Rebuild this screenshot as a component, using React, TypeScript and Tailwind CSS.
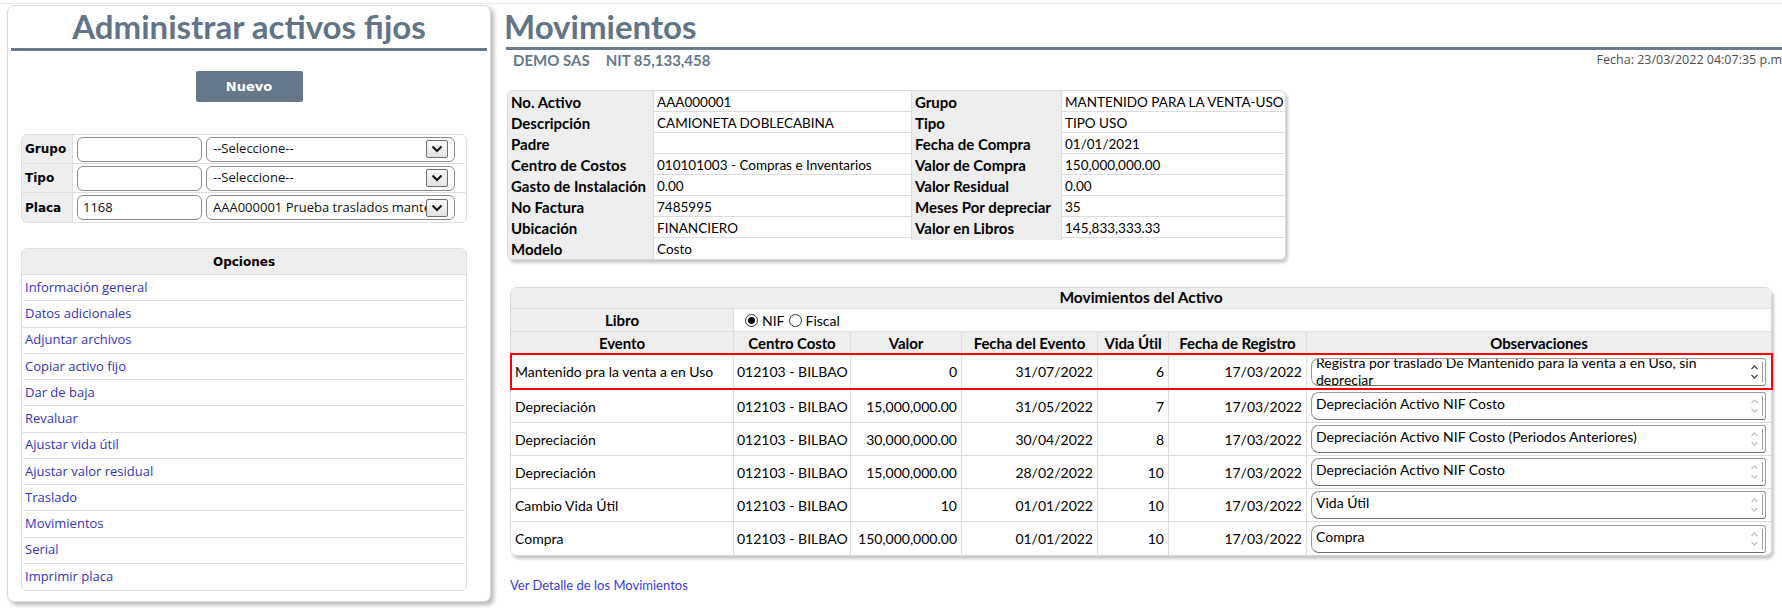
import React from "react";

const infoRows: string[][] = [
  ["No. Activo", "AAA000001", "Grupo", "MANTENIDO PARA LA VENTA-USO"],
  ["Descripción", "CAMIONETA DOBLECABINA", "Tipo", "TIPO USO"],
  ["Padre", "", "Fecha de Compra", "01/01/2021"],
  ["Centro de Costos", "010101003 - Compras e Inventarios", "Valor de Compra", "150,000,000.00"],
  ["Gasto de Instalación", "0.00", "Valor Residual", "0.00"],
  ["No Factura", "7485995", "Meses Por depreciar", "35"],
  ["Ubicación", "FINANCIERO", "Valor en Libros", "145,833,333.33"],
  ["Modelo", "Costo"],
];

const movimientos = [
  { evento: "Mantenido pra la venta a en Uso", valor: "0", fecha: "31/07/2022", vida: "6", obs: "", marcado: true },
  { evento: "Depreciación", valor: "15,000,000.00", fecha: "31/05/2022", vida: "7", obs: "Depreciación Activo NIF Costo" },
  { evento: "Depreciación", valor: "30,000,000.00", fecha: "30/04/2022", vida: "8", obs: "Depreciación Activo NIF Costo (Periodos Anteriores)" },
  { evento: "Depreciación", valor: "15,000,000.00", fecha: "28/02/2022", vida: "10", obs: "Depreciación Activo NIF Costo" },
  { evento: "Cambio Vida Útil", valor: "10", fecha: "01/01/2022", vida: "10", obs: "Vida Útil" },
  { evento: "Compra", valor: "150,000,000.00", fecha: "01/01/2022", vida: "10", obs: "Compra" },
];

const opciones = [
  "Información general",
  "Datos adicionales",
  "Adjuntar archivos",
  "Copiar activo fijo",
  "Dar de baja",
  "Revaluar",
  "Ajustar vida útil",
  "Ajustar valor residual",
  "Traslado",
  "Movimientos",
  "Serial",
  "Imprimir placa",
];

function Chevron() {
  return (
    <svg width="12" height="8" viewBox="0 0 12 8">
      <path d="M1.5 1.5 L6 6 L10.5 1.5" fill="none" stroke="#111" strokeWidth="2" />
    </svg>
  );
}

function FilterRow({ label, code, text, last }: { label: string; code: string; text: string; last?: boolean }) {
  return (
    <div className={`flex h-[29px] ${last ? "" : "border-b border-[#dedede]"}`}>
      <div className="flex w-[51px] items-center border-r border-[#dedede] bg-[#eeeeee] pl-[3px] font-['DejaVu_Sans',sans-serif] text-[12px] font-bold text-black">
        {label}
      </div>
      <div className="flex flex-1 items-center gap-[4px] pl-[4px]">
        <div className="flex h-[25px] w-[125px] items-center rounded-[6px] border border-[#8c8c8c] pl-[5px] text-[13px] text-[#111]">
          {code}
        </div>
        <div className="flex h-[25px] w-[249px] items-center rounded-[6px] border border-[#8c8c8c] pl-[6px] pr-[6px] text-[13px] text-[#111]">
          <span className="flex-1 overflow-hidden whitespace-nowrap">{text}</span>
          <span className="flex h-[18px] w-[22px] shrink-0 items-center justify-center rounded-[2px] border border-[#707070] bg-gradient-to-b from-[#fbfbfb] to-[#e2e2e2]">
            <Chevron />
          </span>
        </div>
      </div>
    </div>
  );
}

function Radio({ checked }: { checked?: boolean }) {
  return (
    <span className="inline-flex h-[13px] w-[13px] items-center justify-center rounded-full border border-[#333] bg-white">
      {checked && <span className="h-[7px] w-[7px] rounded-full bg-black" />}
    </span>
  );
}

function Flechas({ active }: { active?: boolean }) {
  const c = active ? "#4a4a4a" : "#c4c4c4";
  return (
    <svg width="9" height="18" viewBox="0 0 9 18">
      <path d="M1.5 6 L4.5 3 L7.5 6" fill="none" stroke={c} strokeWidth="1.3" />
      <path d="M1.5 12 L4.5 15 L7.5 12" fill="none" stroke={c} strokeWidth="1.3" />
    </svg>
  );
}

function Observacion({ text, active }: { text: string; active?: boolean }) {
  return (
    <div className="flex h-[28px] items-stretch overflow-hidden rounded-l-[8px] rounded-r-[3px] border border-[#9a9a9a] border-b-[#707070] bg-white">
      <div className="flex-1 overflow-hidden whitespace-nowrap pl-[4px] text-[14px]">
        {active ? (
          <div className="-mt-[5px] leading-[17px]">
            Registra por traslado De Mantenido para la venta a en Uso, sin
            <br />
            depreciar
          </div>
        ) : (
          <div className="pt-[2px] leading-[17px]">{text}</div>
        )}
      </div>
      <div className="flex w-[16px] items-center justify-center">
        <Flechas active={active} />
      </div>
      <div className="my-[3px] w-px bg-[#9a9a9a]" />
      <div className="w-[2px]" />
    </div>
  );
}

export default function App() {
  const cols = "grid grid-cols-[223px_117px_111px_136px_71px_138px_1fr]";
  return (
    <div className="h-[608px] w-[1782px] overflow-hidden bg-white pt-[3px] font-['Open_Sans',sans-serif] text-black">
      <div className="h-px bg-[#e8e8e8]" />
      <div className="flex">
        {/* panel izquierdo */}
        <div className="ml-[7px] mt-[1px] h-[597px] w-[484px] shrink-0 rounded-[7px] border border-[#dadada] bg-white shadow-[3px_3px_4px_rgba(0,0,0,0.28)]">
          <h1 className="pt-[4px] text-center font-['Lato',sans-serif] text-[33px] font-bold leading-[33px] text-[#627487]">
            Administrar activos fijos
          </h1>
          <div className="mx-[3px] mt-[5px] h-[3px] bg-[#6a7b8c]" />
          <div className="mt-[20px] flex justify-center">
            <button className="h-[31px] w-[107px] rounded-[2px] bg-[#667789] font-['DejaVu_Sans',sans-serif] text-[13px] font-bold text-white">
              Nuevo
            </button>
          </div>

          <div className="ml-[13px] mt-[32px] w-[446px] overflow-hidden rounded-[6px] border border-[#dedede]">
            <FilterRow label="Grupo" code="" text="--Seleccione--" />
            <FilterRow label="Tipo" code="" text="--Seleccione--" />
            <FilterRow label="Placa" code="1168" text="AAA000001 Prueba traslados mantenido" last />
          </div>

          <div className="ml-[13px] mt-[25px] w-[446px] overflow-hidden rounded-[6px] border border-[#dedede]">
            <div className="flex h-[26px] items-center justify-center border-b border-[#dedede] bg-[#eeeeee] font-['DejaVu_Sans',sans-serif] text-[12px] font-bold">
              Opciones
            </div>
            {opciones.map((o, i) => (
              <div
                key={o}
                className={`flex h-[26.25px] items-center pl-[3px] text-[13px] text-[#3333c4] ${
                  i < opciones.length - 1 ? "border-b border-[#dedede]" : ""
                }`}
              >
                {o}
              </div>
            ))}
          </div>
        </div>

        {/* contenido */}
        <div className="flex-1 pl-[13px] font-['Lato',sans-serif]">
          <h2 className="mt-[6px] text-[33px] font-bold leading-[33px] text-[#627487]">Movimientos</h2>
          <div className="ml-[2px] mt-[4px] h-[3px] bg-[#6a7b8c]" />
          <div className="flex items-start justify-between">
            <div className="ml-[9px] mt-[3px] flex gap-[16px] text-[15px] font-bold leading-[15px] text-[#66788b]">
              <span>DEMO SAS</span>
              <span>NIT 85,133,458</span>
            </div>
            <div className="mt-[3px] whitespace-nowrap font-['Open_Sans',sans-serif] text-[12.5px] leading-[13px] text-[#505050]">
              Fecha: 23/03/2022 04:07:35 p.m
            </div>
          </div>

          <div className="ml-[3px] mt-[22px] w-[779px] overflow-hidden rounded-[6px] border border-[#d8d8d8] text-[13.5px] shadow-[2px_3px_3px_rgba(0,0,0,0.22)]">
            {infoRows.map((r, i) => (
              <div
                key={r[0]}
                className={`grid h-[21px] grid-cols-[146px_258px_150px_1fr] ${
                  i < infoRows.length - 1 ? "border-b border-[#dcdcdc]" : ""
                }`}
              >
                <div className="flex items-center whitespace-nowrap border-r border-[#dcdcdc] bg-[#eeeeee] pl-[3px] text-[15px] font-bold">
                  {r[0]}
                </div>
                <div className={`flex items-center pl-[3px] ${r[2] ? "border-r border-[#dcdcdc]" : ""}`}>{r[1]}</div>
                {r[2] ? (
                  <>
                    <div className="flex items-center whitespace-nowrap border-r border-[#dcdcdc] bg-[#eeeeee] pl-[3px] text-[15px] font-bold">
                      {r[2]}
                    </div>
                    <div className="flex items-center pl-[3px]">{r[3]}</div>
                  </>
                ) : null}
              </div>
            ))}
          </div>

          <div className="ml-[6px] mt-[27px] w-[1262px] rounded-[7px] border border-[#d8d8d8] shadow-[2px_3px_3px_rgba(0,0,0,0.22)]">
            <div className="flex h-[21px] items-center justify-center rounded-t-[7px] border-b border-[#dcdcdc] bg-[#eeeeee] text-[15.5px] font-bold">
              Movimientos del Activo
            </div>
            <div className="flex h-[23px] border-b border-[#dcdcdc]">
              <div className="flex w-[223px] items-center justify-center border-r border-[#dcdcdc] bg-[#eeeeee] text-[15px] font-bold">
                Libro
              </div>
              <div className="flex items-center gap-[4px] pl-[11px] text-[14px]">
                <Radio checked />
                <span>NIF</span>
                <Radio />
                <span>Fiscal</span>
              </div>
            </div>
            <div className={`${cols} h-[22px] border-b border-[#dcdcdc] bg-[#eeeeee] text-[15px] font-bold`}>
              {["Evento", "Centro Costo", "Valor", "Fecha del Evento", "Vida Útil", "Fecha de Registro", "Observaciones"].map(
                (h, i) => (
                  <div
                    key={h}
                    className={`flex items-center justify-center whitespace-nowrap tracking-[-0.1px] ${
                      i < 6 ? "border-r border-[#dcdcdc]" : ""
                    }`}
                  >
                    {h}
                  </div>
                )
              )}
            </div>
            {movimientos.map((m, i) => (
              <div
                key={i}
                className={`${cols} relative text-[14px] ${m.marcado ? "h-[36px]" : "h-[33px]"} ${
                  i < movimientos.length - 1 ? "border-b border-[#dcdcdc]" : ""
                }`}
              >
                <div className="flex items-center whitespace-nowrap border-r border-[#dcdcdc] pl-[4px]">{m.evento}</div>
                <div className="flex items-center whitespace-nowrap border-r border-[#dcdcdc] pl-[3px]">012103 - BILBAO</div>
                <div className="flex items-center justify-end border-r border-[#dcdcdc] pr-[4px]">{m.valor}</div>
                <div className="flex items-center justify-end border-r border-[#dcdcdc] pr-[4px]">{m.fecha}</div>
                <div className="flex items-center justify-end border-r border-[#dcdcdc] pr-[4px]">{m.vida}</div>
                <div className="flex items-center justify-end border-r border-[#dcdcdc] pr-[4px]">17/03/2022</div>
                <div className="flex flex-col justify-center pl-[4px] pr-[5px]">
                  <Observacion text={m.obs} active={m.marcado} />
                </div>
                {m.marcado && (
                  <div className="pointer-events-none absolute -bottom-[1px] -left-[1px] -right-[2px] -top-[1px] border-2 border-[#ff0000]" />
                )}
              </div>
            ))}
          </div>

          <div className="ml-[6px] mt-[21px] text-[13px] leading-[16px] text-[#3c3ce0]">Ver Detalle de los Movimientos</div>
        </div>
      </div>
    </div>
  );
}
